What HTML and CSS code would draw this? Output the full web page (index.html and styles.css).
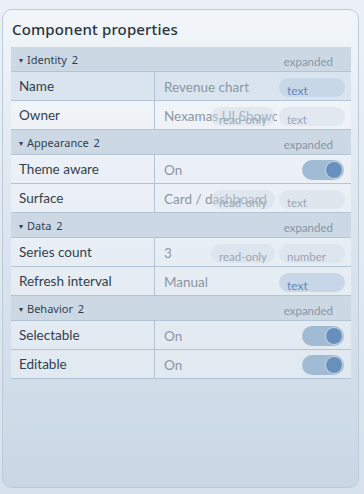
FILE: index.html
```html
<!DOCTYPE html>
<html lang="en">
<head>
    <meta charset="UTF-8">
    <meta name="viewport" content="width=device-width, initial-scale=1.0">
    <title>Component properties</title>
    <link rel="stylesheet" href="styles.css">
</head>
<body>
    <div class="card">
        <h2 class="title">Component properties</h2>
        <div class="grid">
            <div class="group"><span class="group-name"><span class="caret">&#9662;</span>Identity <span class="count">2</span></span><span class="state">expanded</span></div>
            <div class="row active">
                <div class="label">Name</div>
                <div class="value"><span class="val">Revenue chart</span>
                    <span class="tags"><span class="tag edit">text</span></span></div>
            </div>
            <div class="row">
                <div class="label">Owner</div>
                <div class="value"><span class="val">Nexamas UI Showcase</span>
                    <span class="tags"><span class="tag ro">read-only</span><span class="tag ro">text</span></span></div>
            </div>

            <div class="group"><span class="group-name"><span class="caret">&#9662;</span>Appearance <span class="count">2</span></span><span class="state">expanded</span></div>
            <div class="row">
                <div class="label">Theme aware</div>
                <div class="value"><span class="val">On</span><span class="toggle"><span class="knob"></span></span></div>
            </div>
            <div class="row">
                <div class="label">Surface</div>
                <div class="value"><span class="val">Card / dashboard</span>
                    <span class="tags"><span class="tag ro">read-only</span><span class="tag ro">text</span></span></div>
            </div>

            <div class="group"><span class="group-name"><span class="caret">&#9662;</span>Data <span class="count">2</span></span><span class="state">expanded</span></div>
            <div class="row">
                <div class="label">Series count</div>
                <div class="value"><span class="val">3</span>
                    <span class="tags"><span class="tag ro">read-only</span><span class="tag ro">number</span></span></div>
            </div>
            <div class="row">
                <div class="label">Refresh interval</div>
                <div class="value"><span class="val">Manual</span>
                    <span class="tags"><span class="tag edit">text</span></span></div>
            </div>

            <div class="group"><span class="group-name"><span class="caret">&#9662;</span>Behavior <span class="count">2</span></span><span class="state">expanded</span></div>
            <div class="row">
                <div class="label">Selectable</div>
                <div class="value"><span class="val">On</span><span class="toggle"><span class="knob"></span></span></div>
            </div>
            <div class="row">
                <div class="label">Editable</div>
                <div class="value"><span class="val">On</span><span class="toggle"><span class="knob"></span></span></div>
            </div>
        </div>
    </div>
</body>
</html>
```

FILE: styles.css
```css
html {
    background: linear-gradient(#ecf1f7, #d6e1eb);
    min-height: 100%;
}
body {
    font-family: Lato, "Noto Sans", sans-serif;
    margin: 0;
    padding: 9px 0 0 2px;
    color: #33404c;
}
.card {
    box-sizing: border-box;
    width: 357px;
    height: 479px;
    padding: 9px 7px 0 8px;
    border: 1px solid #bccbda;
    border-radius: 10px;
    background: linear-gradient(#f2f6fa, #e2eaf2 30%, #c9d7e5);
}
.title {
    margin: 0 0 7px 1px;
    font-family: "Noto Sans", sans-serif;
    font-size: 15px;
    font-weight: 500;
    line-height: 20px;
    padding-bottom: 1px;
    letter-spacing: 0.15px;
    color: #29343f;
}
.grid {
    width: 340px;
}
.group {
    box-sizing: border-box;
    height: 25px;
    display: flex;
    justify-content: space-between;
    align-items: center;
    padding: 0 18px 0 8px;
    background-color: #ccd9e5;
    border-bottom: 1px solid #b3c4d4;
    font-size: 11px;
}
.group-name {
    font-family: "Noto Sans", sans-serif;
    color: #33414f;
}
.caret {
    font-size: 8px;
    margin-right: 4px;
    position: relative;
    top: -1px;
}
.count {
    margin-left: 2px;
}
.state {
    color: #8696a5;
    margin-top: 4px;
    font-size: 11.5px;
}
.row {
    box-sizing: border-box;
    height: 29px;
    display: flex;
    background-color: rgba(255, 255, 255, 0.35);
    border-bottom: 1px solid #b3c4d4;
    font-size: 13.5px;
}
.row.active {
    background-color: #d9e4ee;
}
.label {
    width: 144px;
    box-sizing: border-box;
    padding-left: 8px;
    line-height: 29px;
    border-right: 1px solid #b3c4d4;
}
.value {
    position: relative;
    flex: 1;
    display: flex;
    align-items: center;
    padding-left: 9px;
    min-width: 0;
}
.val {
    color: #8b97a3;
    white-space: nowrap;
    overflow: hidden;
    max-width: 113px;
    padding-top: 1px;
}
.tags {
    position: absolute;
    right: 6px;
    top: 6px;
    display: flex;
    gap: 4px;
}
.tag {
    box-sizing: border-box;
    height: 19px;
    padding: 6px 8px 0;
    border-radius: 10px;
    font-size: 12px;
    line-height: 14px;
    white-space: nowrap;
}
.tag.edit {
    width: 66px;
    background-color: #c8d7e7;
    color: #5d89bf;
}
.tag.ro {
    background-color: rgba(208, 219, 231, 0.45);
    color: #9aa6b2;
    min-width: 57px;
    font-size: 11.5px;
}
.tag.ro + .tag.ro {
    width: 66px;
}
.toggle {
    position: absolute;
    right: 7px;
    top: 5px;
    width: 42px;
    height: 20px;
    border-radius: 10px;
    background-color: #a2bbd4;
}
.knob {
    position: absolute;
    right: 2px;
    top: 2px;
    width: 16px;
    height: 16px;
    border-radius: 50%;
    background-color: #6890bc;
    box-shadow: 0 0 0 1px rgba(255, 255, 255, 0.4);
}
```
